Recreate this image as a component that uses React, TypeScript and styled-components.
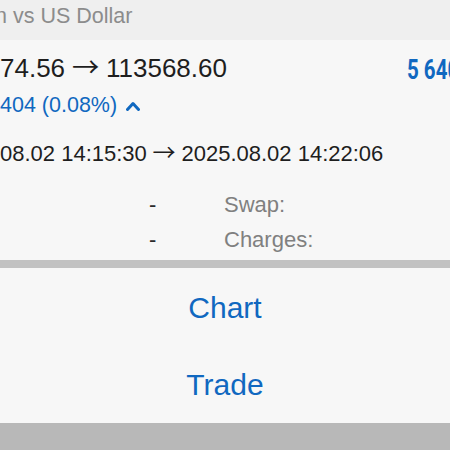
import { Fragment } from 'react'
import styled, { createGlobalStyle } from 'styled-components'

const GlobalStyle = createGlobalStyle`
  html, body {
    margin: 0;
    padding: 0;
    overflow: hidden;
    background: #f7f7f7;
  }
  body {
    font-family: 'Liberation Sans', Arial, sans-serif;
  }
`

const BLUE = '#1068c0'

const Screen = styled.div`
  width: 450px;
  height: 450px;
  display: flex;
  flex-direction: column;
  overflow: hidden;
`

const Header = styled.div`
  height: 40px;
  box-sizing: border-box;
  padding-top: 5px;
  background: #efefef;
  color: #8c8c8c;
  font-size: 21.5px;
  line-height: 22px;
  white-space: nowrap;
  text-indent: -5px;
`

const Details = styled.section`
  display: flex;
  flex-direction: column;
  padding-top: 11.5px;
  padding-bottom: 3px;
  background: #f7f7f7;
`

const PriceRow = styled.div`
  display: flex;
  align-items: flex-start;
  height: 32px;
`

const Prices = styled.div`
  flex: 1;
  color: #1e1e1e;
  font-size: 26px;
  line-height: 32px;
  white-space: nowrap;
`

const Arrow = styled.span`
  font-family: 'Noto Sans CJK JP', 'DejaVu Sans', sans-serif;
  font-size: 1.05em;
  line-height: 0;
  margin: 0 0.25em;
`

const Profit = styled.div`
  flex: 0 0 43px;
  min-width: 0;
  padding-top: 2px;
  color: ${BLUE};
  font-family: Roboto, 'Liberation Sans', sans-serif;
  font-weight: bold;
  font-size: 27px;
  line-height: 32px;
  white-space: nowrap;
  transform: scaleX(0.76);
  transform-origin: left center;
`

const Change = styled.div`
  margin-top: 8px;
  display: flex;
  align-items: center;
  color: ${BLUE};
  font-size: 21.5px;
  line-height: 26px;
  white-space: nowrap;
`

const Chevron = styled.svg`
  margin-left: 9px;
  margin-top: 2px;
`

const Times = styled.div`
  margin-top: 23px;
  color: #1e1e1e;
  font-size: 22px;
  line-height: 26px;
  white-space: nowrap;
`

const Extras = styled.div`
  margin-top: 20px;
  display: grid;
  grid-template-columns: 149px 75px auto;
  grid-auto-rows: 35px;
  align-items: center;
  font-size: 22px;
  line-height: 35px;
`

const Value = styled.span`
  color: #2a2a2a;
`

const Label = styled.span`
  color: #808080;
`

const Divider = styled.div`
  height: 8px;
  background: #c2c2c2;
`

const Actions = styled.nav`
  display: flex;
  flex-direction: column;
  padding-top: 1px;
  background: #f7f7f7;
`

const ActionButton = styled.button`
  height: 77px;
  border: 0;
  padding: 0;
  background: transparent;
  color: ${BLUE};
  font-family: 'Liberation Sans', Arial, sans-serif;
  font-size: 30px;
  line-height: 77px;
  text-align: center;
  cursor: pointer;
`

const Footer = styled.div`
  flex: 1;
  background: #b8b8b8;
`

const App = () => {
  const extras = [
    { value: '-', label: 'Swap:' },
    { value: '-', label: 'Charges:' },
  ]

  return (
    <>
      <GlobalStyle />
      <Screen>
        <Header>n vs US Dollar</Header>
        <Details>
          <PriceRow>
            <Prices>
              74.56<Arrow>→</Arrow>113568.60
            </Prices>
            <Profit>5 640.88</Profit>
          </PriceRow>
          <Change>
            404 (0.08%)
            <Chevron width="14" height="10" viewBox="0 0 14 10">
              <polyline
                points="1.5,8.5 7,2.5 12.5,8.5"
                fill="none"
                stroke={BLUE}
                strokeWidth="3"
                strokeLinecap="round"
                strokeLinejoin="round"
              />
            </Chevron>
          </Change>
          <Times>
            08.02 14:15:30<Arrow>→</Arrow>2025.08.02 14:22:06
          </Times>
          <Extras>
            {extras.map((row) => (
              <Fragment key={row.label}>
                <span />
                <Value>{row.value}</Value>
                <Label>{row.label}</Label>
              </Fragment>
            ))}
          </Extras>
        </Details>
        <Divider />
        <Actions>
          <ActionButton>Chart</ActionButton>
          <ActionButton>Trade</ActionButton>
        </Actions>
        <Footer />
      </Screen>
    </>
  )
}

export default App
